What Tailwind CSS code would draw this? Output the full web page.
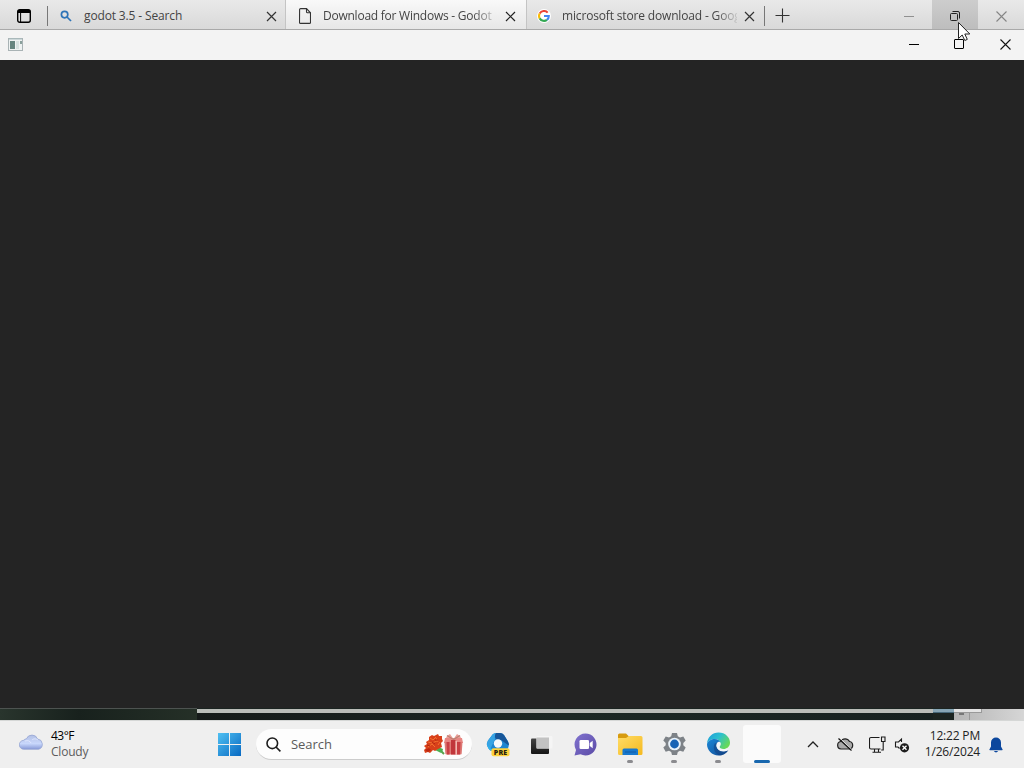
<!DOCTYPE html>
<html lang="en">
<head>
    <meta charset="UTF-8">
    <meta name="viewport" content="width=device-width, initial-scale=1.0">
    <title>Desktop</title>
    <script src="https://cdn.jsdelivr.net/npm/@tailwindcss/browser@4"></script>
</head>
<body class="font-['Open_Sans','Noto_Sans',sans-serif] text-xs">
<div class="relative w-[1024px] h-[768px] overflow-hidden flex flex-col bg-[#242424]">

    <!-- Browser tab strip -->
    <header class="h-[30px] shrink-0 flex bg-linear-to-b from-[#e9e9e9] to-[#d9d9d9] border-b border-[#a9a9a9] text-[#444]">
        <div class="w-[47px] flex items-center pl-[17px] pt-[3px]">
            <svg class="w-[14px] h-[14px]" viewBox="0 0 14 14" fill="none" stroke="#000">
                <rect x=".7" y=".7" width="12.6" height="12.6" rx="2" stroke-width="1.4"/>
                <path d="M1 2.5h12" stroke-width="3"/>
                <path d="M3.6 3v10" stroke-width="1"/>
            </svg>
        </div>
        <div class="w-px h-5 mt-[6px] bg-[#777]"></div>
        <div class="w-[238px] flex items-center pl-3 pt-[3px] border-r border-[#c4c4c4]">
            <svg class="w-3 h-3" viewBox="0 0 12 12" fill="none" stroke="#2e74b8" stroke-width="1.7">
                <circle cx="4.6" cy="4.6" r="3.2"/>
                <path d="M7 7l4 4"/>
            </svg>
            <span class="ml-3 w-[181px] whitespace-nowrap tracking-[-0.14px]">godot 3.5 - Search</span>
            <svg class="ml-[1px] w-[11px] h-[11px]" viewBox="0 0 11 11" stroke="#333" stroke-width="1.2"><path d="M1 1l9 9M10 1l-9 9"/></svg>
        </div>
        <div class="w-[241px] flex items-center pl-[13px] pt-[3px] bg-linear-to-b from-[#f9f9f9] to-[#e7e7e7] border-r border-[#c4c4c4]">
            <svg class="w-3 h-4" viewBox="0 0 12 16" fill="none" stroke="#333" stroke-width="1.1">
                <path d="M.6 1.6a1 1 0 0 1 1-1H7.5l4 4.2v9.6a1 1 0 0 1-1 1h-9a1 1 0 0 1-1-1z"/>
                <path d="M7.5.6v3.2a1 1 0 0 0 1 1h3"/>
            </svg>
            <span class="ml-3 w-[170px] overflow-hidden whitespace-nowrap tracking-[-0.24px] mask-r-from-88% mask-r-to-104%">Download for Windows - Godot</span>
            <svg class="ml-3 w-[11px] h-[11px] shrink-0" viewBox="0 0 11 11" stroke="#222" stroke-width="1.2"><path d="M1 1l9 9M10 1l-9 9"/></svg>
        </div>
        <div class="w-[237px] flex items-center pl-[10px] pt-[3px]">
            <div class="w-[14px] h-[14px] rounded-full bg-white flex items-center justify-center shrink-0">
                <svg class="w-3 h-3" viewBox="0 0 12 12" fill="none" stroke-width="2.1">
                    <path d="M9.7 2.6A5 5 0 0 0 1.7 3.6" stroke="#ea4335"/>
                    <path d="M1.7 3.6a5 5 0 0 0 0 4.8" stroke="#fbbc05"/>
                    <path d="M1.7 8.4a5 5 0 0 0 7.3 1.5" stroke="#34a853"/>
                    <path d="M9 9.9A5 5 0 0 0 10.8 6H6" stroke="#4285f4"/>
                </svg>
            </div>
            <span class="ml-[11px] w-[175px] overflow-hidden whitespace-nowrap tracking-[-0.16px] mask-r-from-88% mask-r-to-102%">microsoft store download - Goog</span>
            <svg class="ml-[7px] w-[11px] h-[11px] shrink-0" viewBox="0 0 11 11" stroke="#333" stroke-width="1.2"><path d="M1 1l9 9M10 1l-9 9"/></svg>
        </div>
        <div class="w-px h-5 mt-[6px] bg-[#777]"></div>
        <div class="flex items-center pl-[10px] pt-[2px]">
            <svg class="w-[15px] h-[15px]" viewBox="0 0 15 15" stroke="#333" stroke-width="1.1"><path d="M7.5 .5v14M.5 7.5h14"/></svg>
        </div>
        <div class="ml-auto flex text-[#8b8b8b]">
            <div class="w-[46px] flex items-center justify-center pt-[3px]"><div class="w-[10px] h-px bg-[#909090]"></div></div>
            <div class="w-[46px] flex items-center justify-center pt-[3px] bg-linear-to-b from-[#cdcdcd] to-[#bdbdbd]">
                <svg class="w-[10px] h-[10px]" viewBox="0 0 10 10" fill="none" stroke="#222" stroke-width="1">
                    <rect x=".5" y="2.5" width="7" height="7" rx="1"/>
                    <path d="M2.5.5H8a1.5 1.5 0 0 1 1.5 1.5v5.5"/>
                </svg>
            </div>
            <div class="w-[46px] flex items-center justify-center pt-[3px]">
                <svg class="w-[11px] h-[11px]" viewBox="0 0 11 11" stroke="#858585" stroke-width="1.1"><path d="M.5 .5l10 10M10.5 .5l-10 10"/></svg>
            </div>
        </div>
    </header>

    <!-- Application title bar -->
    <div class="h-[30px] shrink-0 flex items-center bg-[#f3f3f3] pb-[2px]">
        <svg class="ml-2 w-[15px] h-[13px]" viewBox="0 0 15 13">
            <rect x=".5" y=".5" width="14" height="12" fill="#eef2f2" stroke="#a9b3b5"/>
            <path d="M1 1h13" stroke="#a9bcbf"/>
            <rect x="2" y="3" width="5" height="8" fill="#65857f"/>
            <rect x="8" y="3" width="3" height="8" fill="#d6e2e0"/>
            <rect x="12" y="3" width="2" height="3" fill="#8aa09c"/>
        </svg>
        <div class="ml-auto flex">
            <div class="w-[45px] flex items-center justify-center"><div class="w-[10px] h-px bg-black"></div></div>
            <div class="w-[46px] flex items-center justify-center"><div class="w-[10px] h-[10px] border border-black rounded-[1px]"></div></div>
            <div class="w-[42px] flex items-center justify-center pl-[4px]">
                <svg class="w-[11px] h-[11px]" viewBox="0 0 11 11" stroke="#111" stroke-width="1.1"><path d="M.5 .5l10 10M10.5 .5l-10 10"/></svg>
            </div>
        </div>
    </div>

    <!-- Empty client area -->
    <main class="flex-1 bg-[#242424]"></main>

    <!-- Wallpaper and window edge behind the application -->
    <div class="h-3 shrink-0 flex bg-[#1b2421]">
        <div class="w-[197px] border-t border-[#4d5350] bg-linear-to-r from-[#29352d] via-[#18211d] via-40% to-[#253027]"></div>
        <div class="w-[736px] pt-px">
            <div class="h-1 bg-[#babdb9]"></div>
            <div class="h-[7px] bg-linear-to-r from-[#151a19] via-[#1c2824] to-[#172120]"></div>
        </div>
        <div class="w-[21px] pt-px"><div class="h-1 bg-[#86a5b5] border-b border-[#476879]"></div></div>
        <div class="w-[70px] pt-px bg-[#242424]">
            <div class="h-[11px] bg-linear-to-r from-[#b5b5b5] to-[#d6d6d6]">
                <div class="w-[28px] h-1 bg-[#e4e4e4] border-b border-r border-[#999]"></div>
                <div class="flex"><div class="ml-[5px] w-[5px] h-[2px] bg-[#777]"></div><div class="ml-[5px] w-px h-[7px] bg-[#999]"></div></div>
            </div>
        </div>
    </div>

    <!-- Taskbar -->
    <footer class="h-12 shrink-0 flex items-center bg-[#efefef] border-t border-[#d5d7d6] text-[#222]">
        <svg class="ml-[19px] w-[25px] h-[18px] mb-[6px]" viewBox="0 0 25 18">
            <defs><linearGradient id="cloud" x1="0" y1="0" x2="0" y2="1"><stop stop-color="#b3c0e5"/><stop offset=".6" stop-color="#c8d7fb"/><stop offset="1" stop-color="#8799d7"/></linearGradient></defs>
            <path d="M5 16.3a4.5 4.5 0 0 1-.4-9A4 4 0 0 1 7.4 5.8 6 6 0 0 1 18.6 6a5.3 5.3 0 0 1 1.1 10.3z" fill="url(#cloud)" stroke="#91a0d0" stroke-width=".7"/>
            <path d="M6 8c3-1 5 0 6 2M13 7c2-2 5-1 6 0" fill="none" stroke="#e3eaff" stroke-width=".8"/>
        </svg>
        <div class="ml-[7px] w-[166px] leading-4 pb-[2px]">
            <div class="tracking-[-0.5px] text-black">43°F</div>
            <div class="tracking-[-0.2px] text-[#5c5c5c]">Cloudy</div>
        </div>

        <svg class="ml-px w-[23px] h-[23px]" viewBox="0 0 23 23">
            <defs><linearGradient id="start" x1="0" y1="0" x2="1" y2="1"><stop stop-color="#4fc0f2"/><stop offset="1" stop-color="#0869c2"/></linearGradient></defs>
            <path d="M0 0h11v11H0zM12 0h11v11H12zM0 12h11v11H0zM12 12h11v11H12z" fill="url(#start)"/>
        </svg>

        <div class="ml-[15px] w-[216px] h-[31px] rounded-full bg-[#fdfdfd] border-b border-[#ccc] flex items-center">
            <svg class="ml-[10px] w-[15px] h-[15px]" viewBox="0 0 15 15" fill="none" stroke="#1c1c1c" stroke-width="1.6">
                <circle cx="6.3" cy="6.3" r="5.3"/><path d="M10 10l4.4 4.4"/>
            </svg>
            <span class="ml-[10px] pt-[2px] text-[13px] tracking-[-0.05px] text-[#5b5b5b]">Search</span>
            <svg class="ml-auto mr-2 w-10 h-[21px]" viewBox="0 0 40 21">
                <path d="M12 12l8 8" stroke="#5aa04b" stroke-width="2"/>
                <path d="M11 16l5-2 1 5zM14 13l5 2-1 4z" fill="#4caf50"/>
                <path d="M5 3l3-2 2 1 4-2 1 2 3 0v3l1 2-2 2 1 4-4 2-3 2-2-1-3 3-2-1-3 1-1-3 2-2-2-2 3-2-1-2 3-2z" fill="#d8401a"/>
                <path d="M6 4l3 2 3-3M4 8l4 1 5-2M4 13l4-3 3 3M12 4l2 4M14 11l2-3" fill="none" stroke="#f4712f" stroke-width="1"/>
                <path d="M8 8l3 2M3 11l3 1M11 6l3 0" stroke="#b2240f" stroke-width="1"/>
                <path d="M1 16l4-2 2 2-3 2z" fill="#bd2711"/>
                <path d="M21 6l2-4 3-2 3.500 5L33 0l3 2 2 4z" fill="#eb9f98"/>
                <path d="M21 4h17l1 5H20z" fill="#e88783"/>
                <path d="M20.500 8h18l-.8 11.500q0 1-1.200 1h-14q-1 0-1.200-1z" fill="#dd7975"/>
                <path d="M27 6h4.500v14.500H27z" fill="#c1363b"/>
                <path d="M22.500 8h3v12.500h-2.500zM33 8h3.500L36 20.500h-3z" fill="#c93f44"/>
                <path d="M31.500 7H33v13.500h-1.500z" fill="#f2b7b1"/>
                <path d="M23 1.500l6.500 4L36 1.500" fill="none" stroke="#b98173" stroke-width="1.200"/>
            </svg>
        </div>

        <!-- Pinned and running apps -->
        <div class="ml-1 flex h-full items-center">
            <div class="w-11 h-full flex items-center justify-center">
                <svg class="w-[24px] h-[25px]" viewBox="0 0 24 25">
                    <path d="M6.500 2.500Q8 1 10 1h4q2.500 0 4 2l4 6.500q1.500 3 .5 5.500l-2 4H7.500Q4 19.500 2.500 16.500l-1-2q-1.500-3 .5-6z" fill="#1f86d0"/>
                    <path d="M7 2Q9 .8 11 1q-3 2-2 6L4.500 16.500Q1 16 1 12q0-2 1-3.500z" fill="#37a4e4"/>
                    <path d="M10 1h4q2.500 0 4 2l4 6.500q1 2 .8 4L15 8Q9 8 9 5q-.3-2.500 1-4z" fill="#185699"/>
                    <path d="M1.200 12q2 6 9 5.500l5 1-7.500.5Q4 19 2.500 16.500z" fill="#2bb6ee"/>
                    <circle cx="12" cy="11.500" r="4.200" fill="#f6f9fc"/>
                    <rect x="5.500" y="16.300" width="18" height="8" rx="2" fill="#ffd23c"/>
                    <text x="14.600" y="23" text-anchor="middle" font-size="7" font-weight="800" letter-spacing=".2" fill="#27220e">PRE</text>
                </svg>
            </div>
            <div class="w-11 h-full flex items-center justify-center pr-[2px]">
                <svg class="w-[24px] h-[20px]" viewBox="0 0 24 20">
                    <defs><linearGradient id="task" x1="0" y1="0" x2="0" y2="1"><stop stop-color="#444"/><stop offset="1" stop-color="#161616"/></linearGradient></defs>
                    <rect x="2" y="3.500" width="18" height="15.500" rx="1" fill="url(#task)"/>
                    <rect x="7.500" y="1" width="16" height="12.500" rx="1" fill="#f5f5f5"/>
                    <rect x="7.500" y="2.500" width="12.500" height="11" fill="#c2c2c2"/>
                </svg>
            </div>
            <div class="w-11 h-full flex items-center justify-center pr-[2px]">
                <svg class="w-[23px] h-[23px]" viewBox="0 0 23 23">
                    <defs><linearGradient id="chat" x1="0" y1="0" x2="1" y2="1"><stop stop-color="#8173cf"/><stop offset="1" stop-color="#5b4ba6"/></linearGradient></defs>
                    <path d="M11.500.5a11 11 0 1 1-5 20.800L.5 22.500 2 17A11 11 0 0 1 11.500.5z" fill="url(#chat)"/>
                    <rect x="5.500" y="7" width="9.500" height="9" rx="1.300" fill="#fff"/>
                    <path d="M15.700 10l3-2.300v7.600l-3-2.300z" fill="#fff"/>
                </svg>
            </div>
            <div class="w-11 h-full flex flex-col items-center pt-3">
                <svg class="w-[25px] h-[23px]" viewBox="0 0 25 23">
                    <defs><linearGradient id="folder" x1="0" y1="0" x2="1" y2="1"><stop stop-color="#ffdc66"/><stop offset="1" stop-color="#f5b91f"/></linearGradient></defs>
                    <path d="M0 2Q0 .5 1.500.5H8l3 3V8H0z" fill="#d79b0f"/>
                    <path d="M0 5h8l3-2h12q1.500 0 1.500 1.500v16q0 1.500-1.500 1.500H1.500Q0 22 0 20.500z" fill="url(#folder)"/>
                    <path d="M4.500 22v-5q0-1.500 1.500-1.500h12.500q1.500 0 1.500 1.500v5z" fill="#1878cd"/>
                    <path d="M7 19h11" stroke="#125ba4"/>
                </svg>
                <div class="mt-[4px] w-[6px] h-[3px] rounded-full bg-[#8b8b8f]"></div>
            </div>
            <div class="w-11 h-full flex flex-col items-center pt-[11px]">
                <svg class="w-[25px] h-[24px]" viewBox="0 0 24 24">
                    <path d="M9.500 1h5l.8 3.200 2.200 1.200 3.300-1 2.400 4.200-2.400 2.300v2.300l2.400 2.300-2.400 4.200-3.300-1-2.200 1.200-.8 3.200h-5l-.8-3.200-2.200-1.200-3.300 1-2.400-4.200 2.400-2.300v-2.300L.8 8.600l2.400-4.200 3.300 1 2.200-1.200z" fill="#7d8287"/>
                    <circle cx="12" cy="12" r="6.300" fill="#e9f2fa"/>
                    <circle cx="12" cy="12" r="4.400" fill="#1763b5"/>
                </svg>
                <div class="mt-[4px] w-[6px] h-[3px] rounded-full bg-[#8b8b8f]"></div>
            </div>
            <div class="w-11 h-full flex flex-col items-center pt-[11px]">
                <svg class="w-[25px] h-[24px]" viewBox="0 0 24 24">
                    <defs>
                        <linearGradient id="edgeTop" x1="0" y1="0" x2="1" y2=".6"><stop stop-color="#209bdc"/><stop offset=".5" stop-color="#2cc0cf"/><stop offset="1" stop-color="#68d957"/></linearGradient>
                        <linearGradient id="edgeLow" x1="0" y1="0" x2="1" y2="1"><stop stop-color="#1b87d7"/><stop offset="1" stop-color="#114a93"/></linearGradient>
                    </defs>
                    <path d="M.5 12C.8 5 6 .5 12 .5c7 0 11.500 5 11.500 10 0 4-3 6.500-6.500 6.500-2.500 0-4-1-4-2 0-.8 1.200-1 1.200-3 0-3-2.700-5-6-5C4.500 7 1.500 9 .5 12z" fill="url(#edgeTop)"/>
                    <path d="M.5 12C1.500 9 4.500 7 8.200 7c3 0 5 1.500 5.800 3-3-1-5 2-4 5 1.200 4 6 6 11.800 3.200C19.500 21.700 16 23.500 12 23.500 5.500 23.500.3 18 .5 12z" fill="url(#edgeLow)"/>
                    <path d="M8.200 11.500C6 16 8 22 13.500 23.400c3.500-.2 6.700-2.300 8.300-5.200C16 21 11.200 19 10 15c-.4-1.500-.1-2.800.5-3.900z" fill="#123f80" opacity=".55"/>
                    <path d="M11 11q2-1.500 3 .5c0 2-1.500 2.500-1 4 1 2 5 2 7.500 1l1.500 1.500C17 20.500 11.500 19 10.300 15q-.5-2 .7-4z" fill="#f4f7f9"/>
                </svg>
                <div class="mt-[4px] w-[6px] h-[3px] rounded-full bg-[#8b8b8f]"></div>
            </div>
            <div class="w-11 h-full flex flex-col items-center pt-1">
                <div class="w-[38px] h-[38px] rounded-[3px] bg-[#fbfbfb] flex items-end justify-center">
                    <div class="w-4 h-[3px] rounded-full bg-[#1867ae]"></div>
                </div>
            </div>
        </div>

        <!-- Tray -->
        <svg class="ml-[23px] w-3 h-[7px]" viewBox="0 0 12 7" fill="none" stroke="#222" stroke-width="1.300"><path d="M1 6l5-5 5 5"/></svg>
        <svg class="ml-[17px] mb-[2px] w-[18px] h-[14px]" viewBox="0 0 17 14" fill="none">
            <path d="M4.500 12a3.800 3.800 0 0 1-.3-7.500 5 5 0 0 1 8.800 0 3.800 3.800 0 0 1 0 7.500z" fill="#aaa" stroke="#222" stroke-width="1.200"/>
            <path d="M3 .8l12.500 12" stroke="#efefef" stroke-width="1"/>
            <path d="M2 1.500l13 12" stroke="#111" stroke-width="1.200"/>
        </svg>
        <svg class="ml-[15px] mb-px w-[17px] h-[17px]" viewBox="0 0 17 17" fill="none" stroke="#1c1c1c" stroke-width="1.100">
            <path d="M10.500 1.500H2a1.500 1.500 0 0 0-1.500 1.500v8.500A1.500 1.500 0 0 0 2 13h9.500M5.500 13v3M9.500 13v3M3.500 16.300h8.500"/>
            <path d="M12.500 1h3.500v4.500h-3.500zM14.200 5.500V14h-2"/>
        </svg>
        <svg class="ml-[8px] w-4 h-4" viewBox="0 0 16 16" fill="none" stroke="#1c1c1c" stroke-width="1.100">
            <path d="M7.500 5V2L4.500 5H1.500v5H4l1.500 1.500"/>
            <circle cx="10.500" cy="10.800" r="4.600" fill="#1c1c1c" stroke="none"/>
            <path d="M8.500 8.800l4 4M12.500 8.800l-4 4" stroke="#fff" stroke-width="1.300"/>
        </svg>
        <div class="ml-[7px] w-[63px] pb-[2px] leading-4 text-right whitespace-nowrap tracking-[-0.18px] flex flex-col items-end">
            <div>12:22 PM</div>
            <div>1/26/2024</div>
        </div>
        <svg class="ml-[9px] w-[14px] h-4" viewBox="0 0 14 16" fill="#0c479d">
            <path d="M7 .5a5 5 0 0 1 5 5v4l1.600 3q.3.800-.6.800H1q-.9 0-.6-.8L2 9.500v-4a5 5 0 0 1 5-5zM4.800 14h4.400Q7 16.800 4.800 14z"/>
        </svg>
    </footer>

    <!-- Mouse pointer -->
    <svg class="absolute left-[957px] top-[21px] w-[14px] h-[21px]" viewBox="0 0 14 21">
        <path d="M1.500 1.500v16l3.700-3.500 2.600 5.500 2.500-1.100-2.500-5.400h5z" fill="#fff" stroke="#222" stroke-width="1"/>
    </svg>
</div>
</body>
</html>
